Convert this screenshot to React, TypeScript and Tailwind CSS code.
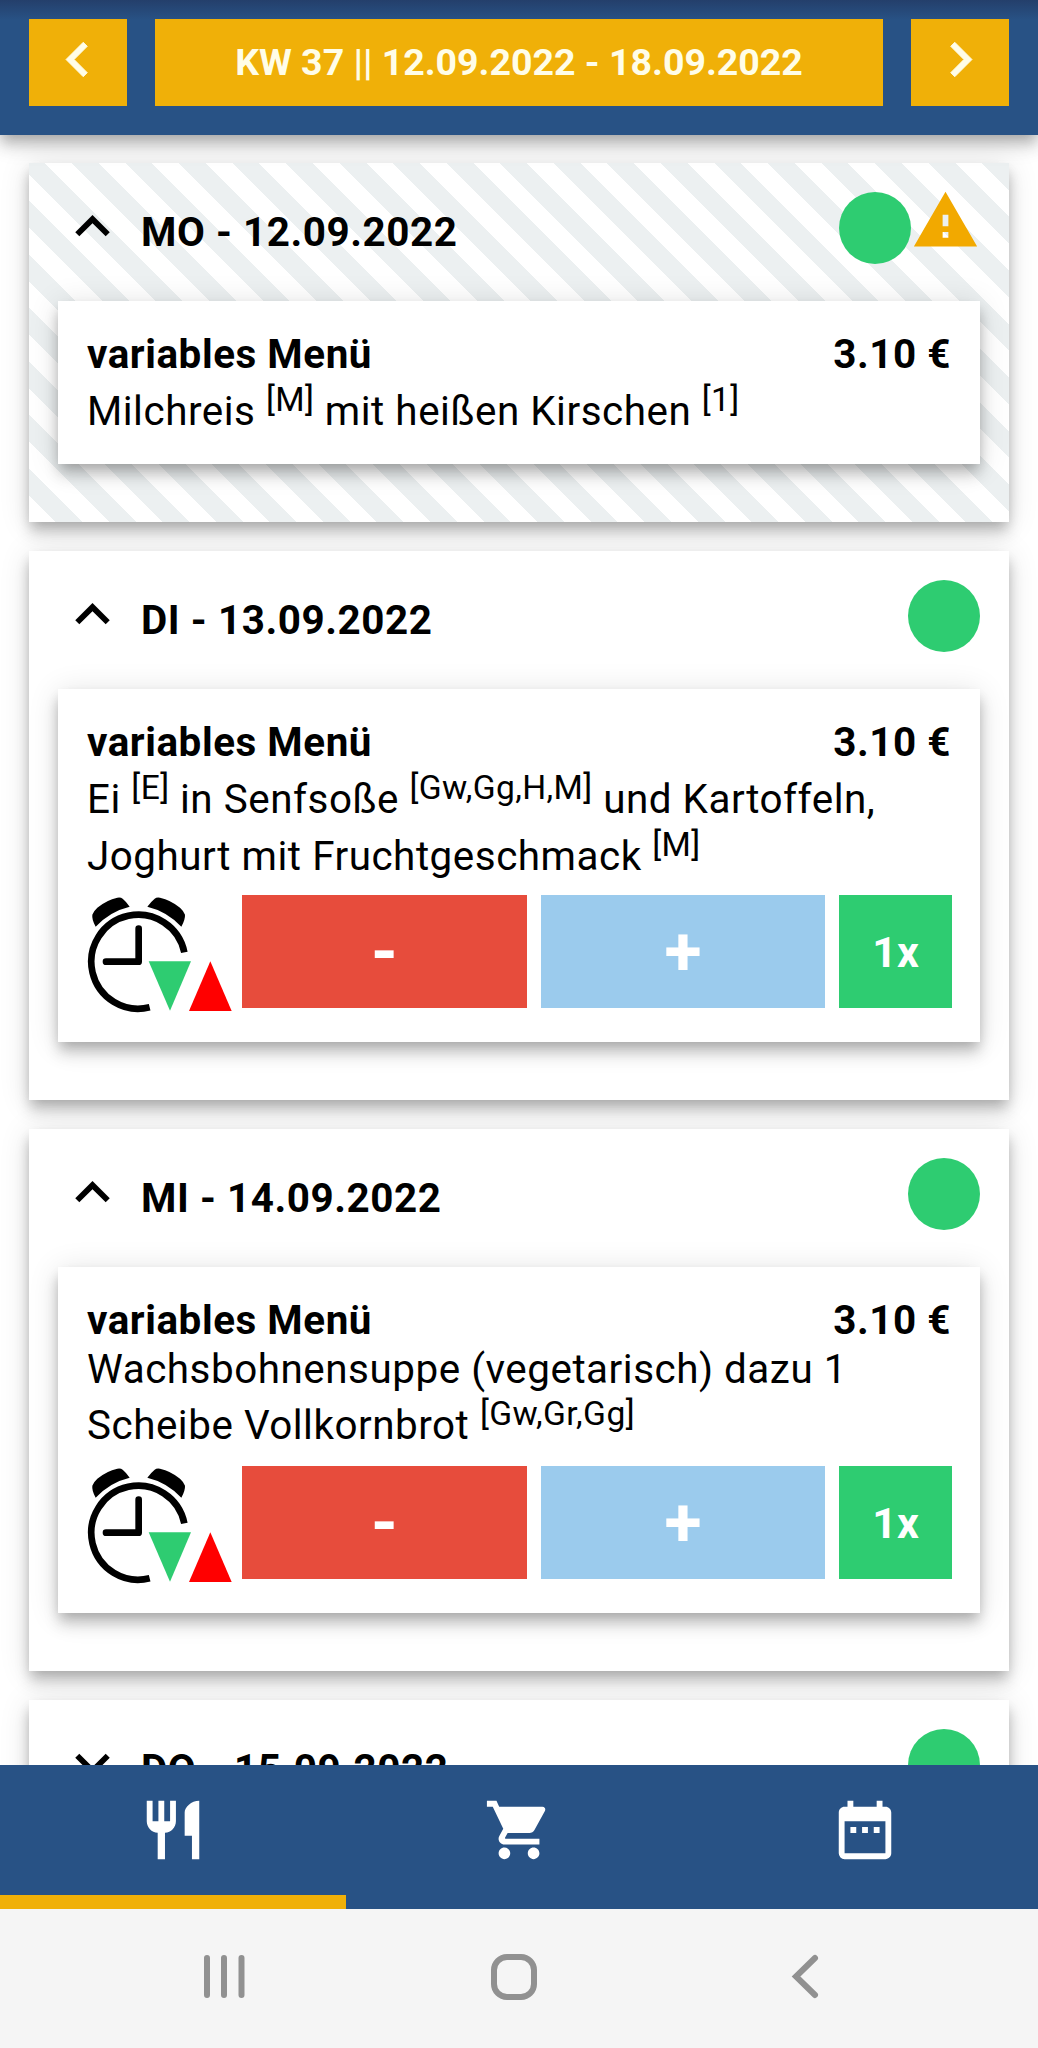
import type { ReactNode } from "react";
import {
  MdDateRange,
  MdExpandLess,
  MdExpandMore,
  MdRestaurant,
  MdShoppingCart,
  MdWarning,
} from "react-icons/md";

const elevation =
  "shadow-[0_6px_12px_-3px_rgba(0,0,0,0.2),0_12px_14px_0_rgba(0,0,0,0.14),0_3px_29px_0_rgba(0,0,0,0.12)]";

type Day = {
  label: string;
  meal?: ReactNode;
  mealHeight?: string;
  orderable?: boolean;
  locked?: boolean;
};

function Allergens({ children }: { children: string }) {
  return (
    <sup className="static align-super text-[33.6px] leading-[40.5px] tracking-[0.4px]">[{children}]</sup>
  );
}

const days: Day[] = [
  {
    label: "MO - 12.09.2022",
    locked: true,
    mealHeight: "h-[163px]",
    meal: (
      <>
        Milchreis <Allergens>M</Allergens> mit heißen Kirschen <Allergens>1</Allergens>
      </>
    ),
  },
  {
    label: "DI - 13.09.2022",
    orderable: true,
    mealHeight: "h-[353px]",
    meal: (
      <>
        Ei <Allergens>E</Allergens> in Senfsoße <Allergens>Gw,Gg,H,M</Allergens> und Kartoffeln,
        <br />
        Joghurt mit Fruchtgeschmack <Allergens>M</Allergens>
      </>
    ),
  },
  {
    label: "MI - 14.09.2022",
    orderable: true,
    mealHeight: "h-[346px]",
    meal: (
      <>
        Wachsbohnensuppe (vegetarisch) dazu 1
        <br />
        Scheibe Vollkornbrot <Allergens>Gw,Gr,Gg</Allergens>
      </>
    ),
  },
  { label: "DO - 15.09.2022" },
];

function WeekArrow({ d }: { d: string }) {
  return (
    <svg viewBox="0 0 24 24" className="size-[69px]" fill="currentColor" stroke="currentColor" strokeWidth="0.3">
      <path d={d} />
    </svg>
  );
}

function AlarmClock() {
  return (
    <svg viewBox="81 45 465 360" className="w-[155px] h-[120px] shrink-0">
      <path d="M373 217A141 141 0 1 0 269 382" fill="none" stroke="#000" strokeWidth="20" />
      <path d="M236 146V245H138" fill="none" stroke="#000" strokeWidth="20" strokeLinecap="round" strokeLinejoin="round" />
      <path d="M107 140Q95 118 97 104Q100 94 112 83Q140 60 172 53Q182 51 188 56Q200 66 209 80Q150 94 107 140Z" />
      <path d="M364 140Q376 118 375 104Q372 94 360 83Q332 60 300 53Q290 51 284 56Q272 66 262 80Q321 94 364 140Z" />
      <path d="M266 244H393L330 392Z" fill="#2ecc71" />
      <path d="M387 393H515L451 244Z" fill="#f00" />
    </svg>
  );
}

function OrderRow() {
  return (
    <div className="mt-auto flex h-[113px] items-start font-bold leading-none text-white">
      <AlarmClock />
      <button className="h-full w-[285px] shrink-0 bg-[#e74c3c] text-[68px]">-</button>
      <button className="ml-3.5 h-full w-[284px] shrink-0 bg-[#9bcbed] text-[68px]">+</button>
      <button className="ml-3.5 h-full w-[113px] shrink-0 bg-[#2ecc71] pt-0.5 text-[43px]">1x</button>
    </div>
  );
}

function DayCard({ day }: { day: Day }) {
  const Arrow = day.meal ? MdExpandLess : MdExpandMore;
  return (
    <section
      className={`shrink-0 px-[29px] pb-[58px] ${elevation} ${
        day.locked
          ? "bg-[repeating-linear-gradient(45deg,#fff_0px,#fff_18.9px,#ecf0f1_18.9px,#ecf0f1_37.86px)]"
          : "bg-white"
      }`}
    >
      <div className="flex h-[138px] items-start pt-[29px]">
        <Arrow className="size-[69px]" />
        <h2 className="ml-[14px] mt-[17px] text-[40.4px] font-bold leading-[48px] tracking-[0.57px]">{day.label}</h2>
        <span className="ml-auto size-[72px] rounded-full bg-[#2ecc71]" />
        {day.locked && <MdWarning className="-mt-1.5 size-[69px] text-[#f2a900]" />}
      </div>
      {day.meal && (
        <div className={`flex flex-col bg-white px-[29px] pt-[30px] pb-[34px] ${day.mealHeight} ${elevation}`}>
          <div className="flex justify-between text-[40.4px] font-bold leading-[48.7px] tracking-[0.55px]">
            <span>variables Menü</span>
            <span>3.10 €</span>
          </div>
          <p className="whitespace-nowrap text-[40.4px] leading-[48.7px] tracking-[0.52px]">{day.meal}</p>
          {day.orderable && <OrderRow />}
        </div>
      )}
    </section>
  );
}

export default function App() {
  return (
    <div className="flex h-[2048px] w-[1038px] flex-col overflow-hidden bg-white font-[Roboto,sans-serif] text-black">
      {/* Week picker */}
      <header
        className={`z-10 flex h-[135px] shrink-0 gap-7 bg-[#285285] bg-[linear-gradient(#243f6b,#285285_20px)] px-[29px] pt-[19px] text-[#fffde8] ${elevation}`}
      >
        <button className="flex h-[87px] w-[98px] justify-center bg-[#f0b008] pt-1.5 pr-0.5">
          <WeekArrow d="M15.41 7.41L14 6l-6 6 6 6 1.41-1.41L10.83 12z" />
        </button>
        <button className="h-[87px] flex-1 bg-[#f0b008] text-[37.5px] font-bold">
          KW 37 || 12.09.2022 - 18.09.2022
        </button>
        <button className="flex h-[87px] w-[98px] justify-center bg-[#f0b008] pt-1.5">
          <WeekArrow d="M10 6L8.590 7.410 13.170 12l-4.580 4.590L10 18l6-6z" />
        </button>
      </header>

      {/* Days */}
      <main className="flex min-h-0 flex-1 flex-col gap-[29px] overflow-hidden px-[29px] pt-7">
        {days.map((day) => (
          <DayCard key={day.label} day={day} />
        ))}
      </main>

      {/* Tabs */}
      <nav className="z-10 grid h-36 shrink-0 grid-cols-3 bg-[#285285] text-white">
        <div className="flex justify-center border-b-[14px] border-[#f0b008] pt-[30px]">
          <MdRestaurant className="size-[70px]" />
        </div>
        <div className="flex justify-center pt-[30px]">
          <MdShoppingCart className="size-[70px]" />
        </div>
        <div className="flex justify-center pt-[30px]">
          <MdDateRange className="size-[70px]" />
        </div>
      </nav>

      {/* System bar */}
      <footer className="h-[139px] shrink-0 bg-[#f5f5f5]">
        <svg viewBox="0 0 1038 139" className="h-full w-full" fill="none" stroke="#919191" strokeWidth="6" strokeLinecap="round">
          <path d="M207 49V86M224 49V86M241.500 49V86" />
          <rect x="494" y="48" width="40" height="40" rx="13" />
          <path d="M815 49L796 67.500L815 86" strokeLinejoin="miter" />
        </svg>
      </footer>
    </div>
  );
}
